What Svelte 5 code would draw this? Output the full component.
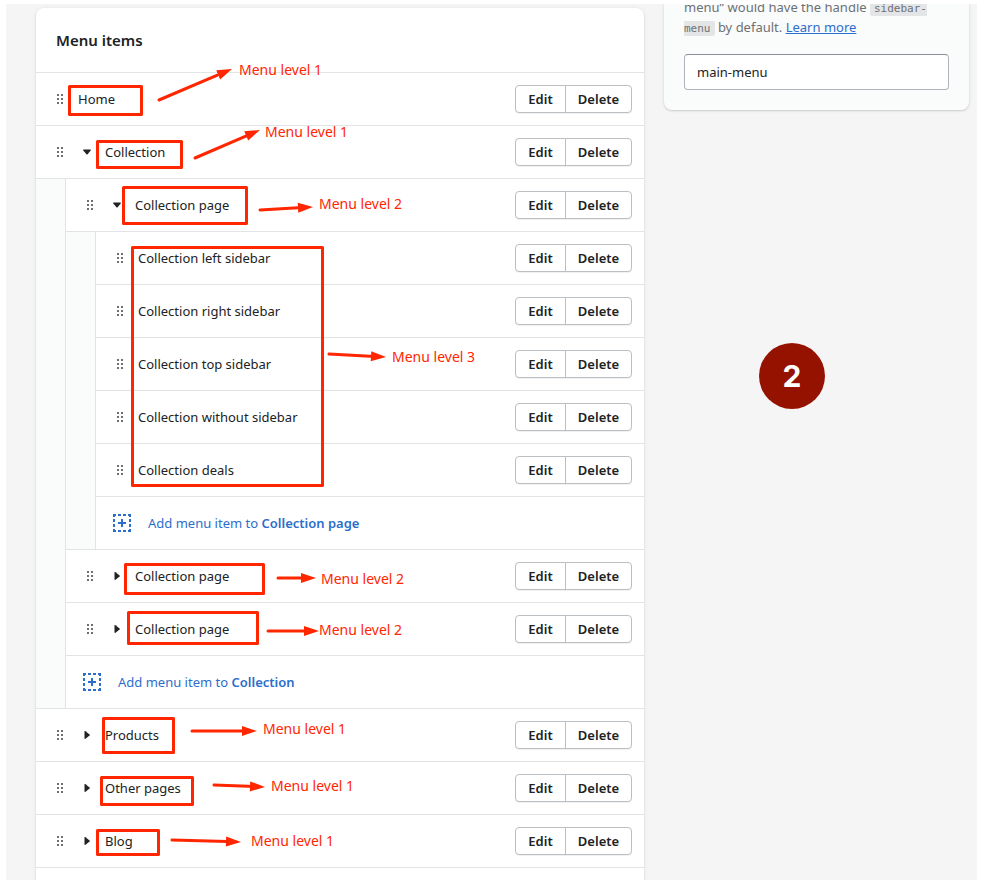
<script lang="ts">
  type Item = { title: string; open?: boolean; children?: Item[] };

  let items = $state<Item[]>([
    { title: 'Home' },
    {
      title: 'Collection',
      open: true,
      children: [
        {
          title: 'Collection page',
          open: true,
          children: [
            { title: 'Collection left sidebar' },
            { title: 'Collection right sidebar' },
            { title: 'Collection top sidebar' },
            { title: 'Collection without sidebar' },
            { title: 'Collection deals' },
          ],
        },
        { title: 'Collection page', children: [] },
        { title: 'Collection page', children: [] },
      ],
    },
    { title: 'Products', children: [] },
    { title: 'Other pages', children: [] },
    { title: 'Blog', children: [] },
  ]);

  let handle = $state('main-menu');

  // Callouts drawn over the page: outlined box, arrow from -> to, caption.
  const notes = [
    { box: [68, 85, 75, 31], from: [159, 100], to: [232, 69], text: 'Menu level 1', at: [239, 75] },
    { box: [96, 140, 87, 29], from: [195, 158], to: [260, 130], text: 'Menu level 1', at: [265, 137] },
    { box: [122, 186, 126, 39], from: [260, 210], to: [313, 207], text: 'Menu level 2', at: [319, 209] },
    { box: [131, 246, 193, 241], from: [329, 354], to: [386, 357], text: 'Menu level 3', at: [392, 362] },
    { box: [124, 563, 141, 32], from: [278, 578], to: [316, 578], text: 'Menu level 2', at: [321, 584] },
    { box: [127, 611, 132, 34], from: [268, 631], to: [319, 631], text: 'Menu level 2', at: [319, 635] },
    { box: [102, 717, 73, 37], from: [192, 731], to: [257, 731], text: 'Menu level 1', at: [263, 734] },
    { box: [100, 776, 94, 30], from: [214, 785], to: [265, 787], text: 'Menu level 1', at: [271, 791] },
    { box: [96, 829, 64, 27], from: [172, 840], to: [241, 842], text: 'Menu level 1', at: [251, 846] },
  ];

  function head([x1, y1]: number[], [x2, y2]: number[]) {
    const len = Math.hypot(x2 - x1, y2 - y1);
    const ux = (x2 - x1) / len;
    const uy = (y2 - y1) / len;
    const bx = x2 - ux * 15;
    const by = y2 - uy * 15;
    return `${x2},${y2} ${bx - uy * 5},${by + ux * 5} ${bx + uy * 5},${by - ux * 5}`;
  }
</script>

{#snippet list(entries: Item[], parent: string)}
  <ul class="list" class:nested={parent !== ''}>
    {#each entries as item}
      <li>
        <div class="row" class:expanded={item.open && item.children?.length}>
          <svg class="grip" width="6" height="10" viewBox="0 0 6 10" aria-hidden="true">
            {#each [0, 4, 8] as y}
              <rect x="0" {y} width="2" height="2" />
              <rect x="4" {y} width="2" height="2" />
            {/each}
          </svg>
          {#if item.children}
            <button
              class="caret"
              aria-label="Toggle {item.title}"
              aria-expanded={!!item.open}
              onclick={() => (item.open = !item.open)}
            >
              <svg width="8" height="8" viewBox="0 0 8 8" aria-hidden="true">
                {#if item.open}
                  <path d="M0.6 1.5h6.8q0.8 0.2 0.3 1L4.6 6.2q-0.6 0.6-1.2 0L0.3 2.5q-0.5-0.8 0.3-1z" />
                {:else}
                  <path d="M1.5 0.6v6.8q0.2 0.8 1 0.3L6.6 4.6q0.6-0.6 0-1.2L2.5 0.3q-0.8-0.5-1 0.3z" />
                {/if}
              </svg>
            </button>
          {/if}
          <span class="title" class:leaf={!item.children}>{item.title}</span>
          <div class="actions">
            <button class="edit">Edit</button>
            <button class="delete">Delete</button>
          </div>
        </div>
        {#if item.open && item.children?.length}
          {@render list(item.children, item.title)}
        {/if}
      </li>
    {/each}
    {#if parent}
      <li>
        <button class="add">
          <svg width="18" height="18" viewBox="0 0 18 18" aria-hidden="true">
            <path
              d="M0 3V0h3v2H2v1zM5 0h3v2H5zM10 0h3v2h-3zM15 0h3v3h-2V2h-1zM0 5h2v3H0zM0 10h2v3H0zM16 5h2v3h-2zM16 10h2v3h-2zM0 15h2v1h1v2H0zM5 16h3v2H5zM10 16h3v2h-3zM15 16h1v-1h2v3h-3zM8 5h2v3h3v2h-3v3H8v-3H5V8h3z"
            />
          </svg>
          <span>Add menu item to <b>{parent}</b></span>
        </button>
      </li>
    {/if}
  </ul>
{/snippet}

<div class="page">
  <div class="canvas">
    <main class="card">
      <h2>Menu items</h2>
      {@render list(items, '')}
    </main>

    <aside class="card side">
      <p>
        menu” would have the handle <code>sidebar-menu</code> by default.
        <a href="#learn">Learn more</a>
      </p>
      <input type="text" aria-label="Handle" bind:value={handle} />
    </aside>
  </div>

  <svg class="notes">
    {#each notes as n}
      <rect
        x={n.box[0] + 1.5}
        y={n.box[1] + 1.5}
        width={n.box[2] - 3}
        height={n.box[3] - 3}
      />
      <line
        x1={n.from[0]}
        y1={n.from[1]}
        x2={n.to[0] - (n.to[0] - n.from[0]) * 0.2}
        y2={n.to[1] - (n.to[1] - n.from[1]) * 0.2}
      />
      <polygon points={head(n.from, n.to)} />
      <text x={n.at[0]} y={n.at[1]}>{n.text}</text>
    {/each}
  </svg>
  <div class="step">2</div>
</div>

<style>
  :global(body) {
    margin: 0;
    background: #fff;
  }
  .page {
    position: relative;
    padding: 4px 6px 7px;
    font-family: 'Noto Sans', 'Open Sans', sans-serif;
    font-size: 13px;
    line-height: 20px;
    color: #202223;
  }
  .canvas {
    display: grid;
    grid-template-columns: minmax(0, 1fr) 305px;
    align-items: start;
    gap: 20px;
    padding: 0 8px 0 30px;
    background: #f5f5f5;
    overflow: hidden;
  }
  .card {
    background: #fff;
    border-radius: 8px;
    box-shadow: 0 0 5px rgba(23, 24, 24, 0.05), 0 1px 2px rgba(0, 0, 0, 0.15);
  }
  main {
    margin-top: 4px;
    padding-bottom: 12px;
  }
  main.card {
    border-radius: 8px 8px 0 0;
  }
  h2 {
    margin: 0;
    padding: 22px 20px;
    font-size: 15px;
    line-height: 20px;
    font-weight: 600;
    border-bottom: 1px solid #e1e3e5;
  }
  .list {
    list-style: none;
    margin: 0;
    padding: 0;
  }
  li {
    border-bottom: 1px solid #e1e3e5;
    background: #fafbfb;
  }
  .nested {
    margin-left: 30px;
    box-shadow: -1px 0 #e1e3e5;
  }
  .nested > li:last-child {
    border-bottom: none;
  }
  .row {
    display: flex;
    align-items: center;
    height: 52px;
    padding: 0 12px 0 21px;
    background: #fff;
  }
  .row.expanded {
    border-bottom: 1px solid #e1e3e5;
  }
  .grip {
    fill: #6d7073;
  }
  button {
    font: inherit;
    color: inherit;
    cursor: pointer;
  }
  .caret {
    display: flex;
    padding: 6px 14px 6px 20px;
    border: none;
    background: none;
    fill: #202223;
  }
  .title.leaf {
    margin-left: 15px;
  }
  .actions {
    display: flex;
    margin-left: auto;
  }
  .actions button {
    height: 28px;
    padding: 0;
    background: #fff;
    border: 1px solid #babfc3;
    font-weight: 600;
    box-shadow: 0 1px 0 rgba(0, 0, 0, 0.05);
  }
  .actions .edit {
    width: 51px;
    border-radius: 4px 0 0 4px;
  }
  .actions .delete {
    width: 67px;
    margin-left: -1px;
    border-radius: 0 4px 4px 0;
  }
  .add {
    display: flex;
    align-items: center;
    gap: 17px;
    width: 100%;
    height: 52px;
    padding: 0 17px;
    border: none;
    background: #fff;
    color: #2c6ecb;
    fill: #2c6ecb;
  }
  .add b {
    font-weight: 600;
  }
  .side {
    margin-top: -7px;
    padding: 0 20px 20px;
    background: #fafbfb;
  }
  .side p {
    margin: 0 0 17px;
    color: #6d7175;
  }
  code {
    padding: 1px 4px;
    border-radius: 2px;
    background: #e4e5e7;
    font-family: 'DejaVu Sans Mono', monospace;
    font-size: 11px;
    line-height: 12px;
  }
  .side a {
    color: #2c6ecb;
  }
  .side input {
    display: block;
    box-sizing: border-box;
    width: 100%;
    height: 36px;
    padding: 0 12px;
    border: 1px solid #aeb4b9;
    border-top-color: #898f94;
    border-radius: 4px;
    background: #fff;
    font: inherit;
    color: inherit;
  }
  .notes {
    position: absolute;
    inset: 0;
    width: 100%;
    height: 100%;
    font-size: 14px;
    pointer-events: none;
  }
  .notes rect {
    fill: none;
    stroke: #ff2600;
    stroke-width: 3;
    stroke-linejoin: round;
  }
  .notes line {
    stroke: #ff2600;
    stroke-width: 3;
    stroke-linecap: round;
  }
  .notes polygon,
  .notes text {
    fill: #ff2600;
  }
  .step {
    position: absolute;
    left: 759px;
    top: 343px;
    width: 66px;
    height: 66px;
    border-radius: 50%;
    background: #951200;
    color: #fff;
    font-family: Inter, sans-serif;
    font-size: 30px;
    font-weight: 700;
    line-height: 66px;
    text-align: center;
  }
</style>
